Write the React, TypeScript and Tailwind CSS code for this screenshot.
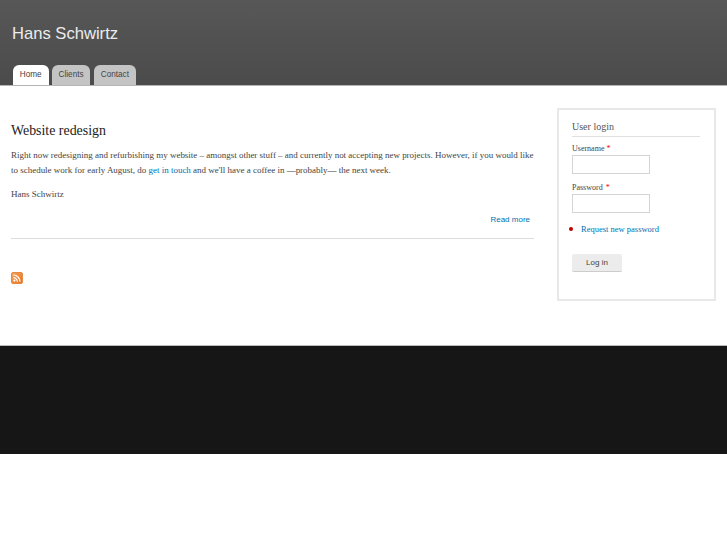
export default function App() {
  const serif = "font-['Liberation_Serif',serif]";
  return (
    <div className="min-h-[545px] bg-white antialiased font-['Liberation_Sans',sans-serif]">
      <header className="h-[86px] bg-gradient-to-b from-[#575757] to-[#4b4b4b] border-b border-[#b5b5b5] flex flex-col">
        <div className="pl-[12px] pt-[24px] text-[16.6px] leading-[20px] text-[#ececec]">Hans Schwirtz</div>
        <nav className="mt-auto flex pl-[13px] gap-[3.3px] text-[8.2px]">
          <a className="h-[20px] w-[35.5px] flex items-center justify-center rounded-t-[6px] bg-white text-[#444444]">Home</a>
          <a className="h-[20px] w-[38.5px] flex items-center justify-center rounded-t-[6px] bg-[#c4c4c4] text-[#444444]">Clients</a>
          <a className="h-[20px] w-[42.5px] flex items-center justify-center rounded-t-[6px] bg-[#c4c4c4] text-[#444444]">Contact</a>
        </nav>
      </header>
      <main className={`h-[259px] flex pl-[11px] pr-[11px] ${serif}`}>
        <section className="w-[523px] pt-[36px]">
          <h2 className="text-[13.9px] leading-[18px] text-[#222222]">Website redesign</h2>
          <p className="mt-[8px] text-[8.97px] leading-[14.5px] text-[#444444] whitespace-nowrap">
            Right now redesigning and refurbishing my website – amongst other stuff – and currently not accepting new projects. However, if you would like<br />
            to schedule work for early August, do <a className="text-[#0071b3]">get in touch</a> and we'll have a coffee in —probably— the next week.
          </p>
          <p className="mt-[10px] text-[9px] leading-[14.5px] text-[#444444]">Hans Schwirtz</p>
          <div className="mt-[11px] pr-[4px] text-right text-[8px] leading-[14px] text-[#0071b3] font-['Liberation_Sans',sans-serif]">Read more</div>
          <div className="mt-[11px] h-px bg-[#dcdcdc]" />
          <svg className="mt-[33px] block" width="12" height="12" viewBox="0 0 12 12">
            <defs>
              <linearGradient id="rssFill" x1="0" y1="0" x2="1" y2="1">
                <stop offset="0" stopColor="#f7a65e" />
                <stop offset="1" stopColor="#e8701f" />
              </linearGradient>
            </defs>
            <rect x="0.5" y="0.5" width="11" height="11" rx="1.5" fill="url(#rssFill)" stroke="#e58a45" />
            <circle cx="3.4" cy="8.6" r="1.1" fill="#fff" />
            <path d="M2.3 5.6a4.1 4.1 0 0 1 4.1 4.1M2.3 3a6.7 6.7 0 0 1 6.7 6.7" fill="none" stroke="#fff" strokeWidth="1.2" />
          </svg>
        </section>
        <aside className="ml-[23px] mt-[22px] w-[159px] h-[193px] border-2 border-[#e8e8e8] pl-[13px] pr-[14px] pt-[10px]">
          <h2 className="text-[10px] leading-[14px] text-[#555555] pb-[2px] border-b border-[#e0e0e0]">User login</h2>
          <label className="block mt-[6px] text-[8px] leading-[12px] text-[#444444]">Username <span className="text-[#ff0000]">*</span></label>
          <div className="w-[78px] h-[19px] border border-[#d4d4d4]" />
          <label className="block mt-[8px] text-[8px] leading-[12px] text-[#444444]">Password <span className="ml-[1px] text-[#ff0000]">*</span></label>
          <div className="w-[78px] h-[19px] border border-[#d4d4d4]" />
          <div className="mt-[10px] -ml-[3px] flex items-center text-[8.5px] leading-[12px] text-[#0071b3]">
            <span className="w-[4px] h-[4px] rounded-full bg-[#c00000]" />
            <span className="ml-[8px]">Request new password</span>
          </div>
          <button className="mt-[19px] block w-[50px] h-[18px] bg-[#ececec] border-b border-[#cccccc] rounded-[2px] text-[8px] text-[#444444] font-['Liberation_Sans',sans-serif]">Log in</button>
        </aside>
      </main>
      <footer className="h-[109px] bg-[#161616] border-t border-[#bbbbbb]" />
    </div>
  );
}
